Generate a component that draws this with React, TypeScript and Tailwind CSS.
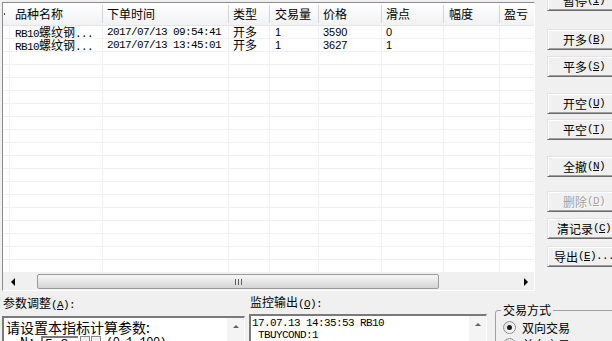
import React from 'react';

const cjk = "font-['Noto_Sans_CJK_SC','Noto_Sans',sans-serif]";
const mono = "font-['Liberation_Mono','Noto_Sans_CJK_SC',monospace] text-[11px] tracking-[-0.6px]";
const sans = "font-['Liberation_Sans','Noto_Sans_CJK_SC',sans-serif] text-[11px]";

const cols = [
  { w: 'w-[7px]', pad: '', title: '' },
  { w: 'w-[93px]', pad: 'pl-[5px]', title: '品种名称' },
  { w: 'w-[126px]', pad: 'pl-[4px]', title: '下单时间' },
  { w: 'w-[41px]', pad: 'pl-[4px]', title: '类型' },
  { w: 'w-[49px]', pad: 'pl-[5px]', title: '交易量' },
  { w: 'w-[63px]', pad: 'pl-[4px]', title: '价格' },
  { w: 'w-[62px]', pad: 'pl-[4px]', title: '滑点' },
  { w: 'w-[56px]', pad: 'pl-[5px]', title: '幅度' },
  { w: 'w-[34px]', pad: 'pl-[4px]', title: '盈亏' },
];

const orders = [
  { time: '2017/07/13 09:54:41', type: '开多', qty: '1', price: '3590', slip: '0' },
  { time: '2017/07/13 13:45:01', type: '开多', qty: '1', price: '3627', slip: '1' },
];

const Product = () => (
  <span className="whitespace-nowrap leading-[12px]">
    <span className={mono}>RB10</span>
    <span className={`${cjk} text-[12px]`}>螺纹钢</span>
    <span className={mono}>...</span>
  </span>
);

function Btn({ label, k, suffix = ')', mt, disabled = false }: { label: string; k: string; suffix?: string; mt: string; disabled?: boolean }) {
  return (
    <button
      className={`${mt} h-[21px] w-[74px] shrink-0 flex items-center justify-center bg-[#f0f0f0] border border-t-[#e3e3e3] border-l-[#e3e3e3] border-r-[#696969] border-b-[#696969] shadow-[inset_1px_1px_0_#ffffff,inset_-1px_-1px_0_#a0a0a0] text-[12px] leading-none whitespace-nowrap ${cjk} ${
        disabled ? 'text-[#a0a0a0] [text-shadow:1px_1px_0_#ffffff]' : 'text-black'
      }`}
    >
      {label}
      <span className={mono}>
        (<span className="underline">{k}</span>
        {suffix}
      </span>
    </button>
  );
}

function Radio({ label, checked, mt }: { label: string; checked: boolean; mt: string }) {
  return (
    <div className={`${mt} flex items-center h-[13px] ml-[2px]`}>
      <div className="w-[13px] h-[13px] rounded-full border border-[#8f8f8f] bg-gradient-to-br from-[#dcdcdc] to-white flex items-center justify-center">
        {checked && <div className="w-[5px] h-[5px] rounded-full bg-[#1a1a1a]" />}
      </div>
      <span className={`${cjk} ml-[6px] text-[12px] leading-[13px] text-black`}>{label}</span>
    </div>
  );
}

export default function App() {
  const emptyRows = Array.from({ length: 19 - orders.length });

  return (
    <div className="w-[612px] h-[341px] overflow-hidden bg-[#f0f0f0] flex flex-col text-black">
      {/* top: order list + buttons */}
      <div className="flex h-[291px] shrink-0">
        <div className="pl-[2px] pt-[2px]">
          <div className="w-[533px] h-[289px] flex flex-col bg-white border border-t-[#8c8c8c] border-l-[#8c8c8c] border-r-white border-b-white">
            {/* header */}
            <div className="flex h-[23px] shrink-0 border-b border-[#e5e5e5] bg-gradient-to-b from-white to-[#f1f2f4]">
              {cols.map((c, i) => (
                <div key={i} className={`${c.w} shrink-0 flex items-center`}>
                  {i === 0 ? (
                    <div className="ml-[1px] w-px h-[2px] bg-[#404040]" />
                  ) : (
                    <>
                      <span className={`${c.pad} ${cjk} text-[12px] leading-none whitespace-nowrap`}>{c.title}</span>
                      {i < cols.length - 1 && <div className="ml-auto w-px h-[18px] bg-[#d5d5d5]" />}
                    </>
                  )}
                </div>
              ))}
            </div>

            {/* rows */}
            <div className="h-[247px] shrink-0 overflow-hidden">
              {orders.map((o, r) => {
                const cells = [
                  null,
                  <Product />,
                  <span className={`${mono} leading-[12px] whitespace-nowrap`}>{o.time}</span>,
                  <span className={`${cjk} text-[12px] leading-[12px]`}>{o.type}</span>,
                  <span className={`${sans} leading-[12px]`}>{o.qty}</span>,
                  <span className={`${sans} leading-[12px]`}>{o.price}</span>,
                  <span className={`${sans} leading-[12px]`}>{o.slip}</span>,
                  null,
                  null,
                ];
                return (
                  <div key={r} className="flex h-[13px] border-b border-[#f0f0f0]">
                    {cols.map((c, i) => (
                      <div key={i} className={`${c.w} ${c.pad} shrink-0 flex items-center leading-[12px] ${i < cols.length - 1 ? 'border-r border-[#f0f0f0]' : ''}`}>
                        {cells[i]}
                      </div>
                    ))}
                  </div>
                );
              })}
              {emptyRows.map((_, r) => (
                <div key={r} className="flex h-[13px] border-b border-[#f0f0f0]">
                  {cols.map((c, i) => (
                    <div key={i} className={`${c.w} shrink-0 ${i < cols.length - 1 ? 'border-r border-[#f0f0f0]' : ''}`} />
                  ))}
                </div>
              ))}
            </div>

            {/* horizontal scrollbar */}
            <div className="h-[17px] shrink-0 flex items-center bg-[#f0f0f0]">
              <div className="w-[20px] h-full flex items-center justify-center">
                <div className="w-0 h-0 border-y-[4px] border-y-transparent border-r-[4px] border-r-black" />
              </div>
              <div className="w-[14px]" />
              <div className="w-[402px] h-[15px] rounded-[2px] border border-[#9a9a9a] bg-gradient-to-b from-[#f6f6f6] via-[#e6e6e6] to-[#d4d4d4] flex items-center justify-center gap-[2px]">
                <div className="w-px h-[6px] bg-[#606060]" />
                <div className="w-px h-[6px] bg-[#606060]" />
                <div className="w-px h-[6px] bg-[#606060]" />
              </div>
              <div className="flex-1" />
              <div className="w-[17px] h-full flex items-center justify-center">
                <div className="w-0 h-0 border-y-[4px] border-y-transparent border-l-[4px] border-l-black" />
              </div>
            </div>
          </div>
        </div>

        {/* action buttons */}
        <div className="flex flex-col pl-[12px]">
          <Btn label="暂停" k="I" mt="mt-[-10px]" />
          <Btn label="开多" k="B" mt="mt-[18px]" />
          <Btn label="平多" k="S" mt="mt-[6px]" />
          <Btn label="开空" k="U" mt="mt-[16px]" />
          <Btn label="平空" k="T" mt="mt-[5px]" />
          <Btn label="全撤" k="N" mt="mt-[16px]" />
          <Btn label="删除" k="D" mt="mt-[14px]" disabled />
          <Btn label="清记录" k="C" mt="mt-[6px]" />
          <Btn label="导出" k="E" suffix=")..." mt="mt-[7px]" />
        </div>
      </div>

      {/* bottom panels */}
      <div className="flex h-[50px] shrink-0 overflow-hidden">
        {/* parameters */}
        <div className="w-[247px] shrink-0 pl-[2px]">
          <div className={`${cjk} pt-[5px] pl-[1px] text-[12px] leading-[14px] whitespace-nowrap`}>
            参数调整<span className={mono}>(<span className="underline">A</span>):</span>
          </div>
          <div className="mt-[4px] w-[243px] h-[40px] flex bg-white border-t-2 border-l-2 border-t-[#7a7a7a] border-l-[#7a7a7a] border-r border-r-white">
            <div className="flex-1 overflow-hidden">
              <div className={`${cjk} pl-[2px] pt-[1px] text-[14px] leading-[16px] whitespace-nowrap`}>请设置本指标计算参数:</div>
              <div className="flex items-start mt-[1px] h-[16px]">
                <span className="ml-[16px] w-[21px] font-['Liberation_Mono',monospace] text-[13px] leading-[14px]">N:</span>
                <div className="w-[37px] h-[16px] border-t-2 border-l-2 border-[#7a7a7a] bg-white pl-[2px] font-['Liberation_Mono',monospace] text-[13px] leading-[14px]">5.8</div>
                <div className="ml-[2px] w-[10px] h-[16px] border border-[#8a8a8a] bg-[#f0f0f0] flex items-center justify-center">
                  <div className="w-0 h-0 border-y-[3px] border-y-transparent border-r-[3px] border-r-black" />
                </div>
                <div className="ml-[1px] w-[10px] h-[16px] border border-[#8a8a8a] bg-[#f0f0f0] flex items-center justify-center">
                  <div className="w-0 h-0 border-y-[3px] border-y-transparent border-l-[3px] border-l-black" />
                </div>
                <span className="ml-[5px] font-['Liberation_Mono',monospace] text-[12px] leading-[14px] tracking-[-0.5px]">(0.1-100)</span>
              </div>
            </div>
            <div className="w-[17px] shrink-0 bg-[#f4f4f4]">
              <div className="h-[17px] flex items-center justify-center">
                <div className="w-0 h-0 border-x-[3px] border-x-transparent border-b-[3px] border-b-[#606060]" />
              </div>
            </div>
          </div>
        </div>

        {/* monitor output */}
        <div className="w-[240px] shrink-0 pl-[2px]">
          <div className={`${cjk} pt-[4px] pl-[1px] text-[12px] leading-[14px] whitespace-nowrap`}>
            监控输出<span className={mono}>(<span className="underline">O</span>):</span>
          </div>
          <div className="mt-[3px] w-[238px] h-[40px] flex bg-white border-t-2 border-l-2 border-t-[#7a7a7a] border-l-[#7a7a7a] border-r border-r-white">
            <div className={`flex-1 overflow-hidden pl-[1px] pt-[1px] ${mono} leading-[12px] whitespace-pre`}>
              <div>17.07.13 14:35:53 RB10</div>
              <div> TBUYCOND:1</div>
              <div>17.07.13 14:37:53 RB10</div>
            </div>
            <div className="w-[17px] shrink-0 bg-[#f4f4f4]">
              <div className="h-[17px] flex items-center justify-center">
                <div className="w-0 h-0 border-x-[3px] border-x-transparent border-b-[3px] border-b-[#606060]" />
              </div>
            </div>
          </div>
        </div>

        {/* trade mode */}
        <fieldset className="ml-[8px] mt-[12px] w-[140px] h-[60px] shrink-0 border border-[#a0a0a0] rounded-[3px] pl-[5px]">
          <legend className={`${cjk} px-[2px] text-[12px] leading-[14px]`}>交易方式</legend>
          <Radio label="双向交易" checked mt="mt-[4px]" />
          <Radio label="单向交易" checked={false} mt="mt-[4px]" />
        </fieldset>
      </div>
    </div>
  );
}
